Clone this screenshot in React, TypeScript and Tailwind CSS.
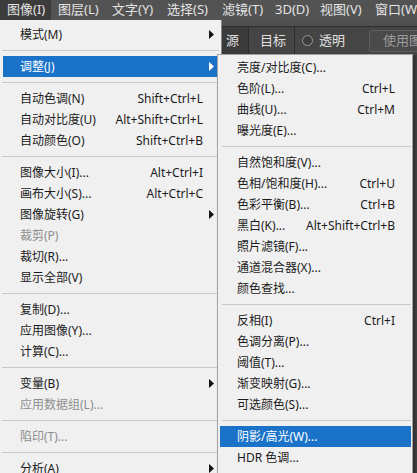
import type { ReactNode } from "react";

type Item =
  | { sep: true }
  | {
      sep?: false;
      label: string;
      shortcut?: string;
      arrow?: boolean;
      disabled?: boolean;
      active?: boolean;
    };

const mainItems: Item[] = [
  { label: "模式(M)", arrow: true },
  { sep: true },
  { label: "调整(J)", arrow: true, active: true },
  { sep: true },
  { label: "自动色调(N)", shortcut: "Shift+Ctrl+L" },
  { label: "自动对比度(U)", shortcut: "Alt+Shift+Ctrl+L" },
  { label: "自动颜色(O)", shortcut: "Shift+Ctrl+B" },
  { sep: true },
  { label: "图像大小(I)...", shortcut: "Alt+Ctrl+I" },
  { label: "画布大小(S)...", shortcut: "Alt+Ctrl+C" },
  { label: "图像旋转(G)", arrow: true },
  { label: "裁剪(P)", disabled: true },
  { label: "裁切(R)..." },
  { label: "显示全部(V)" },
  { sep: true },
  { label: "复制(D)..." },
  { label: "应用图像(Y)..." },
  { label: "计算(C)..." },
  { sep: true },
  { label: "变量(B)", arrow: true },
  { label: "应用数据组(L)...", disabled: true },
  { sep: true },
  { label: "陷印(T)...", disabled: true },
  { sep: true },
  { label: "分析(A)", arrow: true },
];

const subItems: Item[] = [
  { label: "亮度/对比度(C)..." },
  { label: "色阶(L)...", shortcut: "Ctrl+L" },
  { label: "曲线(U)...", shortcut: "Ctrl+M" },
  { label: "曝光度(E)..." },
  { sep: true },
  { label: "自然饱和度(V)..." },
  { label: "色相/饱和度(H)...", shortcut: "Ctrl+U" },
  { label: "色彩平衡(B)...", shortcut: "Ctrl+B" },
  { label: "黑白(K)...", shortcut: "Alt+Shift+Ctrl+B" },
  { label: "照片滤镜(F)..." },
  { label: "通道混合器(X)..." },
  { label: "颜色查找..." },
  { sep: true },
  { label: "反相(I)", shortcut: "Ctrl+I" },
  { label: "色调分离(P)..." },
  { label: "阈值(T)..." },
  { label: "渐变映射(G)..." },
  { label: "可选颜色(S)..." },
  { sep: true },
  { label: "阴影/高光(W)...", active: true },
  { label: "HDR 色调..." },
];

const bar = [
  { label: "图像(I)", w: "w-[51px]", open: true },
  { label: "图层(L)", w: "w-[54px]" },
  { label: "文字(Y)", w: "w-[55px]" },
  { label: "选择(S)", w: "w-[55px]" },
  { label: "滤镜(T)", w: "w-[53px]" },
  { label: "3D(D)", w: "w-[45px]" },
  { label: "视图(V)", w: "w-[55px]" },
  { label: "窗口(W)", w: "w-[60px]" },
];

function Arrow({ white }: { white?: boolean }) {
  return (
    <svg width="5" height="9" viewBox="0 0 5 9" className="shrink-0">
      <polygon points="0,0 5,4.5 0,9" fill={white ? "#ffffff" : "#111111"} />
    </svg>
  );
}

function MenuList({ items, sub }: { items: Item[]; sub?: boolean }) {
  return (
    <>
      {items.map((it, i) =>
        it.sep ? (
          <div
            key={i}
            className={`h-[11px] flex items-center ${sub ? "ml-[4px] mr-[1px]" : "ml-[2px] mr-[2px]"}`}
          >
            <div className="h-px w-full bg-[#c9c9c9]" />
          </div>
        ) : (
          <div
            key={i}
            className={`relative h-[21px] flex items-center pl-[17px] ${
              sub ? "ml-[2px] mr-[1px] pr-[16px]" : "mx-[3px] pr-[15px]"
            } ${it.active ? "bg-[#1a73c9] text-white" : it.disabled ? "text-[#8e8e8e]" : "text-[#1b1b1b]"}`}
          >
            <span className="flex-1 whitespace-nowrap">{it.label}</span>
            {it.shortcut && <span className="whitespace-nowrap">{it.shortcut}</span>}
            {it.arrow && (
              <span className="absolute right-[4px] top-[6px] flex">
                <Arrow white={it.active} />
              </span>
            )}
          </div>
        ),
      )}
    </>
  );
}

function Tab({ children, className }: { children: ReactNode; className?: string }) {
  return (
    <div
      className={`h-full shrink-0 whitespace-nowrap flex items-center border-r border-[#2c2c2c] ${className ?? ""}`}
    >
      {children}
    </div>
  );
}

export default function App() {
  return (
    <div
      className="relative w-[417px] h-[473px] overflow-hidden bg-[#424242] text-[12px]"
      style={{ fontFamily: '"Noto Sans", "Noto Sans CJK SC", sans-serif' }}
    >
      {/* menubar */}
      <div className="h-[20px] bg-[#535353] flex items-center text-[13px] text-[#e4e4e4]">
        {bar.map((b) => (
          <div
            key={b.label}
            className={`${b.w} shrink-0 h-full flex items-center pl-[7px] whitespace-nowrap ${
              b.open ? "bg-[#3c3c3c]" : ""
            }`}
          >
            {b.label}
          </div>
        ))}
      </div>

      {/* options strip + panel tabs */}
      <div className="h-[7px] bg-[#4f4f4f] border-b border-[#2e2e2e]" />
      <div className="h-[27px] bg-[#454545] flex items-center pl-[222px] text-[13px] text-[#e0e0e0]">
        <Tab className="w-[27px] pl-[4px] bg-[#3a3a3a]">源</Tab>
        <Tab className="w-[46px] pl-[11px]">目标</Tab>
        <div className="shrink-0 whitespace-nowrap flex items-center gap-[6px] pl-[7px]">
          <span className="w-[11px] h-[11px] rounded-full border border-[#9a9a9a] bg-[#3c3c3c]" />
          <span>透明</span>
        </div>
        <div className="shrink-0 ml-[24px] h-[22px] flex items-center pl-[13px] pr-[8px] rounded-[2px] border border-[#5e5e5e] bg-[#4a4a4a] text-[#9b9b9b] whitespace-nowrap">
          使用图案
        </div>
      </div>

      {/* main menu */}
      <div className="absolute left-0 top-[20px] w-[222px] h-[460px] bg-[#f0f0f0] border-r border-[#8a8a8a] pt-[4px]">
        <MenuList items={mainItems} />
      </div>

      {/* submenu */}
      <div className="absolute left-[217px] top-[54px] w-[196px] h-[430px] bg-[#f0f0f0] border border-[#a3a3a3] pt-[2px] shadow-[2px_2px_3px_rgba(0,0,0,0.35)]">
        <MenuList items={subItems} sub />
      </div>
    </div>
  );
}
